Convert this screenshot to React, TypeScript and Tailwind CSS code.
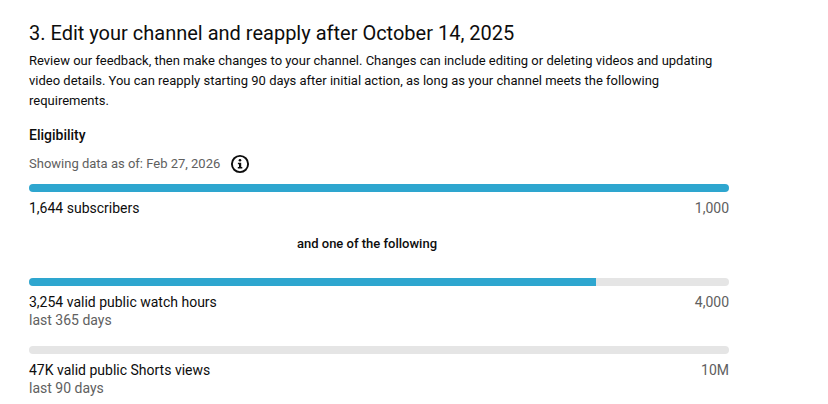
import React from "react";

const Bar = ({ pct }: { pct: number }) => (
  <div className="h-2 w-full overflow-hidden rounded bg-[#e5e5e5]">
    <div className="h-full bg-[#2ea6cf]" style={{ width: `${pct}%` }} />
  </div>
);

const Metric = ({
  label,
  sub,
  target,
  pct,
}: {
  label: string;
  sub?: string;
  target: string;
  pct: number;
}) => (
  <div>
    <Bar pct={pct} />
    <div className="mt-[6px] flex justify-between text-sm leading-5">
      <span className="text-[#0d0d0d]">{label}</span>
      <span className="text-[#606060]">{target}</span>
    </div>
    {sub && <div className="text-sm leading-4 text-[#606060]">{sub}</div>}
  </div>
);

export default function App() {
  return (
    <div className="h-[404px] w-[828px] overflow-hidden bg-white pl-[29px] font-['Roboto',sans-serif]">
      <div className="w-[700px] pt-[19px]">
        <h2 className="text-xl leading-7 text-[#0d0d0d]">
          3. Edit your channel and reapply after October 14, 2025
        </h2>
        <p className="mt-1 text-[13px] leading-5 text-[#0d0d0d]">
          Review our feedback, then make changes to your channel. Changes can include editing or deleting videos and updating video details. You can reapply starting 90 days after initial action, as long as your channel meets the following requirements.
        </p>

        {/* eligibility */}
        <div className="mt-[14px] text-sm leading-5 font-medium text-[#0d0d0d]">Eligibility</div>
        <div className="mt-[9px] flex h-5 items-center text-[13px] text-[#606060]">
          <span>Showing data as of: Feb 27, 2026</span>
          <svg className="ml-[10px] h-5 w-5" viewBox="0 0 20 20" fill="none">
            <circle cx="10" cy="10" r="8.1" stroke="#0d0d0d" strokeWidth="1.9" />
            <circle cx="10" cy="6.3" r="1.3" fill="#0d0d0d" />
            <path d="M7.9 8.7h3.3v4.3h1.1v1.5H7.8V13h1.2v-2.8H7.9z" fill="#0d0d0d" />
          </svg>
        </div>

        <div className="mt-[10px]">
          <Metric label="1,644 subscribers" target="1,000" pct={100} />
        </div>
        <div className="mt-[16px] pr-6 text-center text-[13px] leading-5 font-medium text-[#0d0d0d]">and one of the following</div>
        <div className="mt-[24px]">
          <Metric label="3,254 valid public watch hours" sub="last 365 days" target="4,000" pct={81} />
        </div>
        <div className="mt-[18px]">
          <Metric label="47K valid public Shorts views" sub="last 90 days" target="10M" pct={0} />
        </div>
      </div>
    </div>
  );
}
